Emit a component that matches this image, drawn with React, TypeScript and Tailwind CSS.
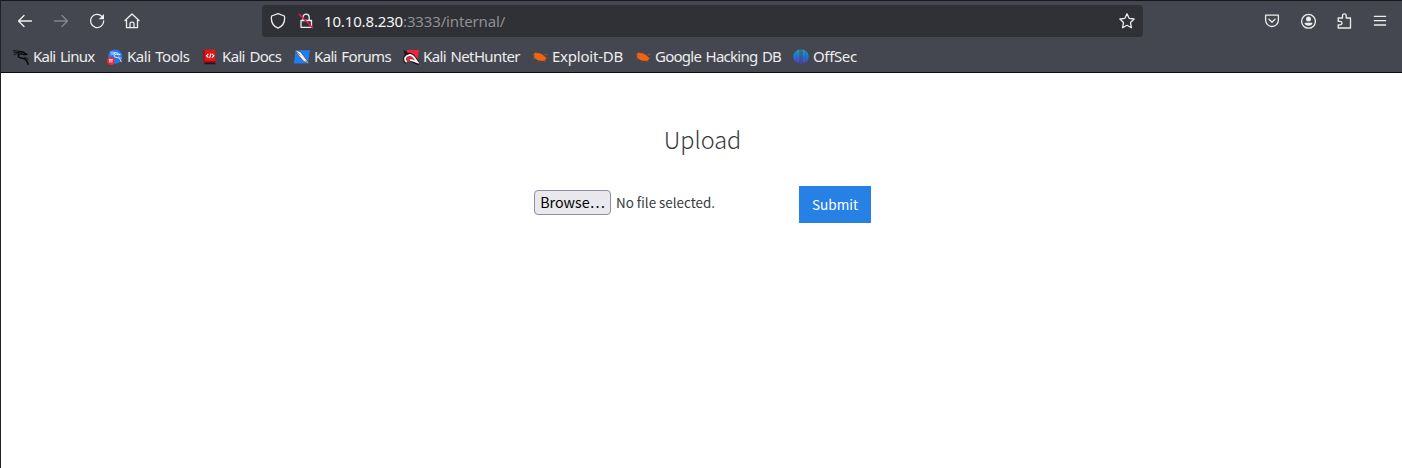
import React from "react";

function KaliDragon({ color = "#050505" }: { color?: string }) {
  return (
    <g fill="none" stroke={color} strokeLinecap="round" strokeLinejoin="round">
      <path d="M.6 1.6 7.4 2.3M.5 3.2 6.2 3.6M1.2 5.6 5.4 4.4" strokeWidth=".8" />
      <path d="M5.8 3.2C8.7 2.3 10.8 2.7 11.7 4.4L14 5.3 11.3 5.6C7.8 4 4.7 5.2 5.4 7.5 6 9.6 9.5 8.7 12 10.1 14.1 11.3 14.5 12.8 15.2 15.2" strokeWidth="1.35" />
      <path d="M11.6 8.4 15.2 10.2" strokeWidth=".8" />
    </g>
  );
}

function Bug() {
  return (
    <g>
      <path d="M2.2 4.4C4 3 8.5 4.4 11.6 6.5l2.5 2.4-.9 2.7C8.7 12.6 4.2 11.4 2 8.1Z" fill="#f26411" />
      <path d="M.4 5.4 3.6 6.5M3.2 3.2l2.3 2.2M8 3.6l.5 2.5M12.3 5.8 15.6 5.3M12.8 9h2.6M11.4 10.8l2.1 2.4M7.4 10.9l-.8 1.9M3.6 8.7 1 10.2" stroke="#c95a20" strokeWidth=".6" fill="none" />
    </g>
  );
}

const bookmarks: { name: string; width: string; spacing: string; icon: React.ReactNode }[] = [
  { name: "Kali Linux", width: "w-[94px]", spacing: "tracking-[-0.74px]", icon: <KaliDragon /> },
  {
    name: "Kali Tools", width: "w-[95px]", spacing: "tracking-[-0.47px]",
    icon: <g><circle cx="8.2" cy="7.6" r="7.2" fill="#2377ed" /><g transform="translate(3.2 1.8) scale(.72)"><KaliDragon color="#f1f6ff" /></g><circle cx="3.9" cy="12" r="3.9" fill="#ee2a31" /><path d="M1.9 10.7h4M3 10.8v2.8M4.9 10.8v2.8" stroke="white" strokeWidth=".9" /></g>,
  },
  {
    name: "Kali Docs", width: "w-[92px]", spacing: "tracking-[-0.65px]",
    icon: <g><path d="M2.2.5h11.1v12H2.2Z" fill="#e41518" /><path d="M2 1v13M3 12.7h10.5" stroke="#a50a13" strokeWidth="1.4" /><path d="M3 13.6h10.3v1.7H2Z" fill="#370e15" /><path d="m6.4 4.9-1.9 1.9 1.9 1.9m3.6-3.8 1.9 1.9L10 8.7M8.9 4.5l-1.3 4.6" fill="none" stroke="white" strokeWidth="1.1" /></g>,
  },
  {
    name: "Kali Forums", width: "w-[109px]", spacing: "tracking-[-0.66px]",
    icon: <g><path d="M1.5 1.2H16L13.9 14.4H0Z" fill="#227df2" /><path d="m.3.6 6.4 2.5 4.5 5.9L15.6 15.3l-6-3.1-4.2-4.7Z" fill="#f7f2e9" stroke="#222" strokeWidth=".5" /><path d="m1.2 1.4 5.2 5.1m5 5 1.8 1.9" stroke="#333" strokeWidth=".6" /></g>,
  },
  {
    name: "Kali NetHunter", width: "w-[129px]", spacing: "tracking-[-0.63px]",
    icon: <g><path d="M4 1H16l-1.7 11.5H4Z" fill="#f0233d" /><path d="m.2 1 4.6 2.2L2 6Z" fill="#171717" /><path d="M3.8 13.7C-.1 10.5 1.7 6.2 6.1 5.4c4.3-.8 6.3 5.3 9.3 8.7-3.1.3-6-3.3-8.5-3.1" fill="none" stroke="#171717" strokeWidth="3.2" /><path d="M3.8 13.1C.6 10.3 2.2 6.9 6.1 6.1c4.2-.8 6 4.6 8.4 7.2-2.3-.4-4.9-2.6-7.6-2.3" fill="none" stroke="#f7f3f3" strokeWidth="1.9" /></g>,
  },
  { name: "Exploit-DB", width: "w-[103px]", spacing: "tracking-[-0.22px]", icon: <Bug /> },
  { name: "Google Hacking DB", width: "w-[158px]", spacing: "tracking-[-0.75px]", icon: <Bug /> },
  {
    name: "OffSec", width: "w-[75px]", spacing: "tracking-[-0.35px]",
    icon: <g><defs><linearGradient id="offsec" gradientUnits="userSpaceOnUse" x1="0" y1="0" x2="0" y2="16"><stop stopColor="#19a6bb" /><stop offset=".55" stopColor="#2769d7" /><stop offset="1" stopColor="#6530ca" /></linearGradient></defs><path d="M3 2.2v10.9C-.6 10.4-.6 4.9 3 2.2ZM3.3 2C4.4 1 5.6.5 6.6.4v11.8L5.4 14.6 3.3 13.3ZM7.5.5h1v15h-1ZM9.4.4c1 .1 2.2.6 3.3 1.6v11.3l-2.1 1.3-1.2-2.4ZM13 2.2c3.6 2.7 3.6 8.2 0 10.9Z" fill="url(#offsec)" /></g>,
  },
];

function Glyph({ children, className = "" }: { children: React.ReactNode; className?: string }) {
  return <svg viewBox="0 0 16 16" className={"h-4 w-4 shrink-0 " + className} fill="none" stroke="currentColor" strokeWidth="1.3" strokeLinecap="round" strokeLinejoin="round">{children}</svg>;
}

export default function App() {
  return (
    <div className="flex h-[468px] w-[1402px] flex-col overflow-hidden border-l border-[#20202a] bg-white">
      <header className="h-[73px] shrink-0 border-y border-t-[#17181d] border-b-[#0c0c12] bg-[#44474f] font-['Noto_Sans',sans-serif] text-[#ededee]">
        <div className="flex h-10 items-center">
          <nav className="flex w-[261px] shrink-0 items-center gap-5 pl-4 text-[#f0f0f1]">
            <Glyph><path d="M1.5 8h13M7 2.5 1.5 8 7 13.5" /></Glyph>
            <Glyph className="text-[#85878d]"><path d="M1.5 8h13M9 2.5 14.5 8 9 13.5" /></Glyph>
            <Glyph><path d="M14.7 8A6.6 6.6 0 1 1 12.9 3.4" /><path d="M15 1v5.3H9.7Z" fill="currentColor" stroke="none" /></Glyph>
            <Glyph className="-ml-px"><path d="M1 7.5 8 1l7 6.5M2.5 7v7.7h11V7M6 14.3v-3.7C6 8.7 10 8.7 10 10.6v3.7" /></Glyph>
          </nav>
          <div className="flex h-8 w-[881px] shrink-0 items-center rounded bg-[#303136] px-2">
            <Glyph className="mr-3"><path d="M8 .7 14.4 3C15.4 8.8 12.9 13 8 15.2 3.1 13 .6 8.8 1.6 3Z" /></Glyph>
            <Glyph><path d="M3 7.5h10.5v6.8H3Z" /><path d="M5 7V4.3C5 .1 11.2.1 11.2 4.3V7" /><path d="m1.2 1.3 13.4 13.4" stroke="#ed174f" strokeWidth="1.5" /></Glyph>
            <span className="ml-2.5 whitespace-nowrap text-[15px] leading-5 tracking-[-0.15px] text-[#8f8f94]"><span className="text-[#f5f5f6]">10.10.8.230</span>:3333/internal/</span>
            <Glyph className="ml-auto"><path d="m8 .8 2.1 4.5 5 .7-3.6 3.5.9 5.2L8 12.3l-4.4 2.4.9-5.2L.9 6l5-.7Z" /></Glyph>
          </div>
          <div className="ml-auto mr-[14px] flex items-center gap-5">
            <Glyph><path d="M1.6 2.2h12.8v4.9a6.4 6.4 0 0 1-12.8 0ZM5 6.2l3 3 3-3" /></Glyph>
            <Glyph><circle cx="8.5" cy="8.3" r="6.9" /><circle cx="8.5" cy="5.9" r="2.5" fill="currentColor" stroke="none" /><path d="M4.5 9.8h8c0 4-8 4-8 0Z" fill="currentColor" stroke="none" /></Glyph>
            <Glyph><path d="M2.2 5h4.3V2.9c0-2.8 3.7-2.8 3.7 0V5h4.3v10H2.2v-3.2h1.9c2.5 0 2.5-3.5 0-3.5H2.2Z" /></Glyph>
            <Glyph><path d="M2.4 3.4h11.2M2.4 7.7h11.2M2.4 12h11.2" /></Glyph>
          </div>
        </div>
        <div className="flex h-[31px] items-center pl-3">
          {bookmarks.map((item) => (
            <div key={item.name} className={"flex shrink-0 items-center gap-1 " + item.width}>
              <svg viewBox="0 0 16 16" className="h-4 w-4 shrink-0">{item.icon}</svg>
              <span className={"whitespace-nowrap pb-0.5 text-[15px] leading-5 [word-spacing:1.3px] " + item.spacing}>{item.name}</span>
            </div>
          ))}
        </div>
      </header>
      <main className="flex flex-1 flex-col items-center font-['Noto_Sans_CJK_SC','Noto_Sans',sans-serif] text-[#373a3c]">
        <h1 className="ml-0.5 mt-12 text-[23.5px] font-light leading-9">Upload</h1>
        <form className="ml-0.5 mt-[29px] flex w-[337px] items-start">
          <button type="button" className="mt-1 h-[25px] w-[77px] shrink-0 rounded border border-[#8f8f9d] bg-[#e9e9ed] pb-0.5 text-[14.3px] leading-[21px] text-black">Browse…</button>
          <span className="ml-[5px] mt-1 whitespace-nowrap text-[13.4px] leading-[25px]">No file selected.</span>
          <button type="button" className="ml-auto h-[37px] w-[72px] bg-[#2780e3] text-[13.6px] leading-[37px] text-white">Submit</button>
        </form>
      </main>
    </div>
  );
}
